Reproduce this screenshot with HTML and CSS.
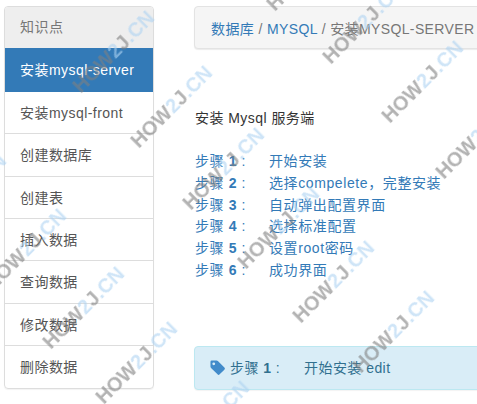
FILE: index.html
```html
<!DOCTYPE html>
<html lang="zh">
<head>
<meta charset="utf-8">
<title>安装mysql-server</title>
<link rel="stylesheet" href="styles.css">
</head>
<body>
<div class="page">
  <aside class="panel">
    <div class="panel-heading">知识点</div>
    <a class="item active">安装mysql-server</a>
    <a class="item">安装mysql-front</a>
    <a class="item">创建数据库</a>
    <a class="item">创建表</a>
    <a class="item">插入数据</a>
    <a class="item">查询数据</a>
    <a class="item">修改数据</a>
    <a class="item last">删除数据</a>
  </aside>
  <main class="main">
    <nav class="crumb"><a>数据库</a> / <a>MYSQL</a> / 安装MYSQL-SERVER</nav>
    <p class="intro">安装 Mysql 服务端</p>
    <ul class="steps">
      <li><span class="label">步骤 <b>1</b> :</span><span>开始安装</span></li>
      <li><span class="label">步骤 <b>2</b> :</span><span>选择compelete，完整安装</span></li>
      <li><span class="label">步骤 <b>3</b> :</span><span>自动弹出配置界面</span></li>
      <li><span class="label">步骤 <b>4</b> :</span><span>选择标准配置</span></li>
      <li><span class="label">步骤 <b>5</b> :</span><span>设置root密码</span></li>
      <li><span class="label">步骤 <b>6</b> :</span><span>成功界面</span></li>
    </ul>
    <div class="alert">
      <svg class="tag" viewBox="0 0 16 16" aria-hidden="true"><path d="M0.5 1.8 A1.3 1.3 0 0 1 1.8 .5 H7 A2 2 0 0 1 8.4 1.1 L15.3 8 A1.6 1.6 0 0 1 15.3 10.3 L10.3 15.3 A1.6 1.6 0 0 1 8 15.3 L1.1 8.4 A2 2 0 0 1 .5 7 Z M4 2.6 A1.5 1.5 0 1 0 4 5.6 A1.5 1.5 0 1 0 4 2.6 Z" fill-rule="evenodd"/></svg>
      <span class="alert-label">步骤 <b>1</b> :</span><span>开始安装 edit</span>
    </div>
  </main>
</div>
<div class="marks" aria-hidden="true">
  <span class="wm w1">HOW<i>2</i>J<i>.CN</i></span>
  <span class="wm w2">HOW<i>2</i>J<i>.CN</i></span>
  <span class="wm w3">HOW<i>2</i>J<i>.CN</i></span>
  <span class="wm w4">HOW<i>2</i>J<i>.CN</i></span>
  <span class="wm w5">HOW<i>2</i>J<i>.CN</i></span>
  <span class="wm w6">HOW<i>2</i>J<i>.CN</i></span>
  <span class="wm w7">HOW<i>2</i>J<i>.CN</i></span>
  <span class="wm w8">HOW<i>2</i>J<i>.CN</i></span>
  <span class="wm w9">HOW<i>2</i>J<i>.CN</i></span>
  <span class="wm w10">HOW<i>2</i>J<i>.CN</i></span>
  <span class="wm w11">HOW<i>2</i>J<i>.CN</i></span>
  <span class="wm w12">HOW<i>2</i>J<i>.CN</i></span>
  <span class="wm w13">HOW<i>2</i>J<i>.CN</i></span>
  <span class="wm w14">HOW<i>2</i>J<i>.CN</i></span>
  <span class="wm w15">HOW<i>2</i>J<i>.CN</i></span>
</div>
</body>
</html>
```

FILE: styles.css
```css
* { box-sizing: border-box; }
html, body { margin: 0; height: 100%; overflow: hidden; background: #fff; }
body {
  position: relative;
  font: 14px/20px "Liberation Sans", "Noto Sans CJK SC", sans-serif;
  color: #333;
  letter-spacing: .45px;
}
.page { display: flex; align-items: flex-start; padding: 6px 0 0 4px; width: 700px; }
.panel {
  flex: none; width: 150px; border: 1px solid #ddd; border-radius: 4px;
  box-shadow: 0 1px 1px rgba(0,0,0,.05); overflow: hidden;
}
.panel-heading { height: 41px; padding: 10px 15px; background: #eee; color: #777; }
.item { display: block; height: 42.33px; padding: 11px 15px 0; color: #555; border-bottom: 1px solid #ddd; }
.item.active { background: #337ab7; color: #fff; height: 44px; padding-top: 12px; border-bottom: 0; }
.item.last { border-bottom: 0; }
.main { flex: none; width: 500px; margin-left: 40px; }
.crumb {
  height: 43px; padding: 12px 16px; background: #f5f5f5; border: 1px solid #e3e3e3; border-radius: 4px;
  box-shadow: 0 1px 1px rgba(0,0,0,.08); color: #777; white-space: nowrap; letter-spacing: .38px;
}
.crumb a { color: #337ab7; }
.intro { margin: 59px 0 0 1px; color: #333; }
.steps { list-style: none; margin: 23px 0 0 1px; padding: 0; color: #337ab7; letter-spacing: .6px; }
.steps li { display: flex; height: 21.8px; line-height: 21.8px; }
.label { flex: none; width: 74px; }
.alert {
  display: flex; align-items: center; height: 44px; margin-top: 64px; padding: 0 15px;
  background: #d9edf7; border: 1px solid #bce8f1; border-radius: 4px; color: #31708f;
  box-shadow: 0 1px 1px rgba(0,0,0,.05);
}
.tag { flex: none; width: 15px; height: 15px; margin-right: 5px; fill: #428bca; }
.alert-label { flex: none; width: 74px; }
.marks { position: absolute; inset: 0; overflow: hidden; pointer-events: none; }
.wm {
  position: absolute; font: bold 20px/20px "Liberation Sans", sans-serif; color: #808080; opacity: .6;
  letter-spacing: 0;
  transform: rotate(-45deg); transform-origin: 0 100%; white-space: nowrap; filter: blur(.7px);
}
.wm i { font-style: normal; color: #aed3f2; }
.w1 { left: 83px; top: 76px; }
.w2 { left: 141px; top: 131px; }
.w3 { left: 277px; top: -6px; }
.w4 { left: 333px; top: 47px; }
.w5 { left: 392px; top: 106px; }
.w6 { left: 446px; top: 162px; }
.w7 { left: 193px; top: 193px; }
.w8 { left: 248px; top: 252px; }
.w9 { left: 303px; top: 306px; }
.w10 { left: 363px; top: 356px; }
.w11 { left: -5px; top: 274px; }
.w12 { left: 53px; top: 332px; }
.w13 { left: 106px; top: 387px; }
.w14 { left: 178px; top: 446px; }
.w15 { left: -65px; top: 219px; }
```
